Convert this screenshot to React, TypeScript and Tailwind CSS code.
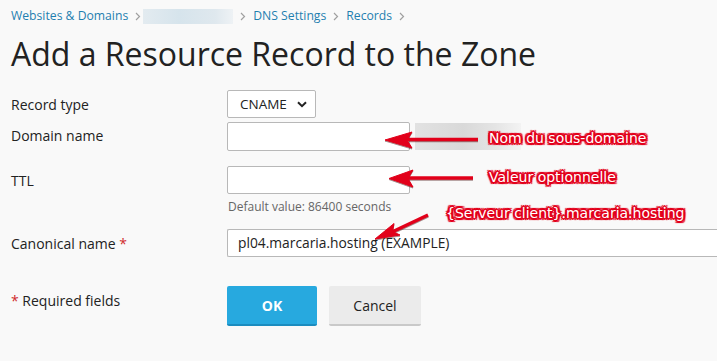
const font = "font-['Open_Sans',sans-serif]"

function Chevron() {
  return (
    <svg className="mx-[7px]" width="6" height="9" viewBox="0 0 6 9">
      <path d="M1 1 4.5 4.5 1 8" fill="none" stroke="#a0a0a0" strokeWidth="1.2" />
    </svg>
  )
}

function Crumb({ children }: { children: React.ReactNode }) {
  return (
    <>
      <span className="text-[#1f7fb0]">{children}</span>
      <Chevron />
    </>
  )
}

function Note({ className, children }: { className: string; children: React.ReactNode }) {
  return (
    <span
      className={`absolute whitespace-nowrap font-['DejaVu_Sans',sans-serif] text-[14px] leading-none text-white [text-shadow:2px_0_0_#e2001a,-2px_0_0_#e2001a,0_2px_0_#e2001a,0_-2px_0_#e2001a,1px_1px_0_#e2001a,-1px_-1px_0_#e2001a,1px_-1px_0_#e2001a,-1px_1px_0_#e2001a,2px_2px_1px_#e2001a,-2px_2px_1px_#e2001a,2px_-2px_1px_#e2001a,-2px_-2px_1px_#e2001a] ${className}`}
    >
      {children}
    </span>
  )
}

export default function App() {
  return (
    <div className={`relative h-[361px] w-[717px] overflow-hidden bg-[#f9f9f9] ${font} text-[#222]`}>
      <div className="px-[11px] pt-[8px]">
        <nav className="flex h-[16px] items-center text-[12.2px]">
          <Crumb>Websites &amp; Domains</Crumb>
          <span className="-ml-[5px] h-[15px] w-[90px] bg-[linear-gradient(90deg,#e3ebf0,#d6e4ec_40%,#dfe8ee_80%,#eef2f5)]" />
          <Chevron />
          <Crumb>DNS Settings</Crumb>
          <Crumb>Records</Crumb>
        </nav>

        <h1 className="mt-[10px] text-[32px] leading-[40px] tracking-[0px] text-[#222]">
          Add a Resource Record to the Zone
        </h1>

        <div className="mt-[16px] flex flex-col text-[14px]">
          <div className="flex h-[28px] items-center">
            <label className="w-[216px]">Record type</label>
            <div className="flex h-[28px] w-[89px] items-center justify-between rounded-[2px] border border-[#b8b8b8] bg-white pl-[12px] pr-[8px] text-[13.5px]">
              <span>CNAME</span>
              <svg width="10" height="7" viewBox="0 0 10 7">
                <path d="M1 1.2 5 5.2 9 1.2" fill="none" stroke="#222" strokeWidth="2" />
              </svg>
            </div>
          </div>

          <div className="mt-[4px] flex h-[29px] items-center">
            <label className="w-[216px] -mt-[2px]">Domain name</label>
            <div className="h-[29px] w-[183px] rounded-[2px] border border-[#b8b8b8] bg-white" />
            <div className="ml-[5px] h-[27px] w-[106px] bg-[linear-gradient(90deg,#e2e2e2,#d9d9d9_45%,#e4e4e4_75%,#f3f3f3)]" />
          </div>

          <div className="mt-[15px] flex h-[28px] items-center">
            <label className="w-[216px]">TTL</label>
            <div className="h-[28px] w-[183px] rounded-[2px] border border-[#b8b8b8] bg-white" />
          </div>
          <div className="ml-[217px] mt-[4px] text-[12px] text-[#666]">Default value: 86400 seconds</div>

          <div className="mt-[13px] flex h-[28px] items-center">
            <label className="w-[216px]">
              Canonical name <span className="text-[#d02b2b]">*</span>
            </label>
            <div className="flex h-[28px] flex-1 -mr-[11px] items-center rounded-l-[2px] border border-r-0 border-[#b8b8b8] bg-white pl-[10px] text-[13.8px]">
              pl04.marcaria.hosting (EXAMPLE)
            </div>
          </div>

          <div className="mt-[29px] flex">
            <div className="w-[216px] pt-[4px]">
              <span className="text-[#d02b2b]">*</span> Required fields
            </div>
            <div className="flex gap-[12px]">
              <button className="h-[40px] w-[90px] rounded-[2px] border-b-[2px] border-[#1b8cbf] bg-[#27a9df] text-[14px] font-bold text-white">
                OK
              </button>
              <button className="h-[40px] w-[92px] rounded-[2px] border-b-[2px] border-[#c9c9c9] bg-[#ebebeb] text-[14px] text-[#222]">
                Cancel
              </button>
            </div>
          </div>
        </div>
      </div>

      <svg className="pointer-events-none absolute left-0 top-0" width="717" height="361">
        <g fill="#e2001a" stroke="#e2001a" style={{ filter: 'drop-shadow(0 1px 0.6px rgba(60,0,0,0.45))' }}>
          <line x1="478" y1="139.5" x2="405" y2="139.5" strokeWidth="3.5" />
          <polygon points="385,140 412,132 407,140 412,148" strokeWidth="1" strokeLinejoin="round" />
          <line x1="473" y1="178" x2="405" y2="178" strokeWidth="3.5" />
          <polygon points="389,178.5 413,170 408,178.5 413,187" strokeWidth="1" strokeLinejoin="round" />
          <line x1="428" y1="215" x2="392" y2="232" strokeWidth="3.5" />
          <polygon points="375,239 394,223.5 392.5,231.5 400,235" strokeWidth="1" strokeLinejoin="round" />
        </g>
      </svg>

      <Note className="left-[489px] top-[131px]">Nom du sous-domaine</Note>
      <Note className="left-[489px] top-[170px]">Valeur optionnelle</Note>
      <Note className="left-[446px] top-[206px]">{'{Serveur client}.marcaria.hosting'}</Note>
    </div>
  )
}
